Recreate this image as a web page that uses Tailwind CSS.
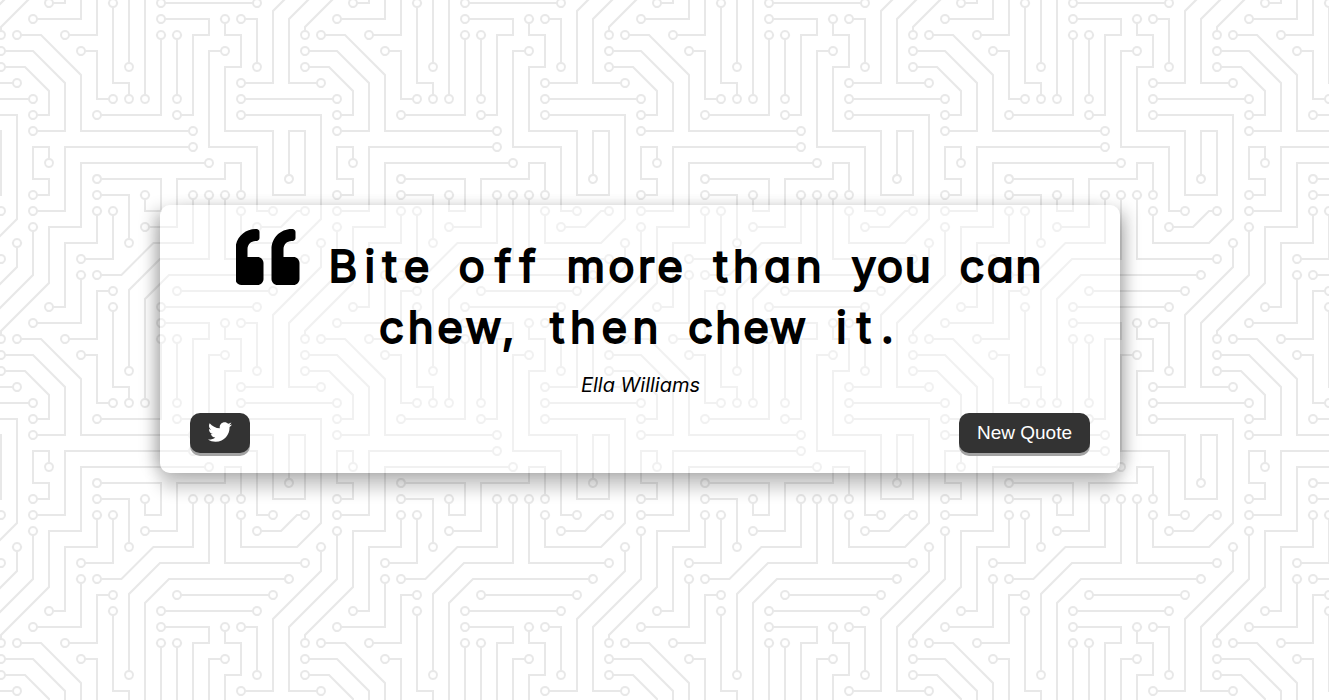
<!DOCTYPE html>
<html lang="en"><head><meta charset="utf-8"><title>Random Quote</title>
<script src="https://cdn.jsdelivr.net/npm/@tailwindcss/browser@4"></script></head>
<body class="relative min-h-screen overflow-hidden bg-white">
<svg class="absolute inset-0 h-[700px] w-full" aria-hidden="true"><defs><pattern id="circuit" width="304" height="304" patternUnits="userSpaceOnUse" patternTransform="translate(-16 -126)">
<path id="traces" fill="#000" fill-opacity="0.09" fill-rule="evenodd" d="M44.1 224a5 5 0 1 1 0 2H0v-2h44.1zm160 48a5 5 0 1 1 0 2H82v-2h122.1zm57.8-46a5 5 0 1 1 0-2H304v2h-42.1zm0 16a5 5 0 1 1 0-2H304v2h-42.1zm6.2-114a5 5 0 1 1 0 2h-86.2a5 5 0 1 1 0-2h86.2zm-256-48a5 5 0 1 1 0 2H0v-2h12.1zm185.8 34a5 5 0 1 1 0-2h86.2a5 5 0 1 1 0 2h-86.2zM258 12.1a5 5 0 1 1-2 0V0h2v12.1zm-64 208a5 5 0 1 1-2 0v-54.2a5 5 0 1 1 2 0v54.2zm48-198.2V80h62v2h-64V21.9a5 5 0 1 1 2 0zm16 16V64h46v2h-48V37.9a5 5 0 1 1 2 0zm-128 96V208h16v12.1a5 5 0 1 1-2 0V210h-16v-76.1a5 5 0 1 1 2 0zm-5.9-21.9a5 5 0 1 1 0 2H114v48H85.9a5 5 0 1 1 0-2H112v-48h12.1zm-6.2 130a5 5 0 1 1 0-2H176v-74.1a5 5 0 1 1 2 0V242h-60.1zm-16-64a5 5 0 1 1 0-2H114v48h10.1a5 5 0 1 1 0 2H112v-48h-10.1zM66 284.1a5 5 0 1 1-2 0V274H50v30h-2v-32h18v12.1zM236.1 176a5 5 0 1 1 0 2H226v94h48v32h-2v-30h-48v-98h12.1zm25.8-30a5 5 0 1 1 0-2H274v44.1a5 5 0 1 1-2 0V146h-10.1zm-64 96a5 5 0 1 1 0-2H208v-80h16v-14h-42.1a5 5 0 1 1 0-2H226v18h-16v80h-12.1zm86.2-210a5 5 0 1 1 0 2H272V0h2v32h10.1zM98 101.9V146H53.9a5 5 0 1 1 0-2H96v-42.1a5 5 0 1 1 2 0zM53.9 34a5 5 0 1 1 0-2H80V0h2v34H53.9zm60.1 3.9V66H82v64H69.9a5 5 0 1 1 0-2H80V64h32V37.9a5 5 0 1 1 2 0zM101.9 82a5 5 0 1 1 0-2H128V37.9a5 5 0 1 1 2 0V82h-28.1zm16-64a5 5 0 1 1 0-2H146v44.1a5 5 0 1 1-2 0V18h-26.1zm102.2 270a5 5 0 1 1 0 2H98v14h-2v-16h124.1zM242 149.9V160h16v34h-16v62h48v48h-2v-46h-48v-66h16v-30h-16v-12.1a5 5 0 1 1 2 0zM53.9 18a5 5 0 1 1 0-2H64V2H48V0h18v18H53.9zm112 32a5 5 0 1 1 0-2H192V0h50v2h-48v48h-28.1zm-48-48a5 5 0 0 1-9.8-2h2.07a3 3 0 1 0 5.66 0H178v34h-18V21.9a5 5 0 1 1 2 0V32h14V2h-58.1zm0 96a5 5 0 1 1 0-2H137l32-32h39V21.9a5 5 0 1 1 2 0V66h-40.17l-32 32H117.9zm28.1 90.1a5 5 0 1 1-2 0v-76.51L175.59 80H224V21.9a5 5 0 1 1 2 0V82h-49.59L146 112.41v75.69zm16 32a5 5 0 1 1-2 0v-99.51L184.59 96H300.1a5 5 0 0 1 3.9-3.9v2.07a3 3 0 0 0 0 5.66v2.07a5 5 0 0 1-3.9-3.9H185.41L162 121.41v98.69zm-144-64a5 5 0 1 1-2 0v-3.51l48-48V48h32V0h2v50H66v55.41l-48 48v2.69zM50 53.9v43.51l-48 48V208h26.1a5 5 0 1 1 0 2H0v-65.41l48-48V53.9a5 5 0 1 1 2 0zm-16 16V89.41l-34 34v-2.82l32-32V69.9a5 5 0 1 1 2 0zM12.1 32a5 5 0 1 1 0 2H9.41L0 43.41V40.6L8.59 32h3.51zm265.8 18a5 5 0 1 1 0-2h18.69l7.41-7.41v2.82L297.41 50H277.9zm-16 160a5 5 0 1 1 0-2H288v-71.41l16-16v2.82l-14 14V210h-28.1zm-208 32a5 5 0 1 1 0-2H64v-22.59L40.59 194H21.9a5 5 0 1 1 0-2H41.41L66 216.59V242H53.9zm150.2 14a5 5 0 1 1 0 2H96v-56.6L56.6 162H37.9a5 5 0 1 1 0-2h19.5L98 200.6V256h106.1zm-150.2 2a5 5 0 1 1 0-2H80v-46.59L48.59 178H21.9a5 5 0 1 1 0-2H49.41L82 208.59V258H53.9zM34 39.8v1.61L9.41 66H0v-2h8.59L32 40.59V0h2v39.8zM2 300.1a5 5 0 0 1 3.9 3.9H3.83A3 3 0 0 0 0 302.17V256h18v48h-2v-46H2v42.1zM34 241v63h-2v-62H0v-2h34v1zM17 18H0v-2h16V0h2v18h-1zm273-2h14v2h-16V0h2v16zm-32 273v15h-2v-14h-14v14h-2v-16h18v1zM0 92.1A5.02 5.02 0 0 1 6 97a5 5 0 0 1-6 4.9v-2.07a3 3 0 1 0 0-5.66V92.1zM80 272h2v32h-2v-32zm37.9 32h-2.07a3 3 0 0 0-5.66 0h-2.07a5 5 0 0 1 9.8 0zM5.9 0A5.02 5.02 0 0 1 0 5.9V3.83A3 3 0 0 0 3.83 0H5.9zm294.2 0h2.07A3 3 0 0 0 304 3.83V5.9a5 5 0 0 1-3.9-5.9zm3.9 300.1v2.07a3 3 0 0 0-1.83 1.83h-2.07a5 5 0 0 1 3.9-3.9z"/>
</pattern></defs><rect width="100%" height="100%" fill="url(#circuit)"/></svg>
<script>
// Punch the solder-pad holes out of the traces: [x, y] centre of each pad.
const pads = [[49,225],[209,273],[257,225],[257,241],[273,129],[177,129],[17,81],[193,113],[289,113],[257,17],[193,225],[193,161],[241,17],[257,33],[129,129],[145,225],[129,113],[81,161],[113,241],[177,161],[97,177],[129,225],[65,289],[241,177],[257,145],[273,193],[193,241],[177,145],[289,33],[97,97],[49,145],[49,33],[113,33],[65,129],[97,81],[129,33],[113,17],[145,65],[225,289],[241,145],[49,17],[161,49],[161,17],[113,97],[209,17],[145,193],[225,17],[161,225],[17,161],[49,49],[33,209],[33,65],[17,33],[273,49],[257,209],[49,241],[17,193],[209,257],[33,161],[49,257],[17,177]];
const traces = document.getElementById('traces');
traces.setAttribute('d', traces.getAttribute('d') + pads.map(([x, y]) => `M${x - 3} ${y}a3 3 0 1 0 6 0a3 3 0 1 0-6 0z`).join(''));
</script>
<main class="relative w-[1280px] pt-[205px]">
<section class="mx-auto flex h-[268px] w-[960px] flex-col rounded-[10px] bg-white/40 px-[30px] pt-[20px] pb-[20px] text-black shadow-[0_16px_16px_rgba(0,0,0,0.2),11px_0_16px_-5px_rgba(0,0,0,0.22),-11px_0_16px_-5px_rgba(0,0,0,0.22)]">
<blockquote class="flex flex-col font-['Inter',sans-serif] text-[44px] leading-[61px] font-normal tracking-[5px] whitespace-nowrap [-webkit-text-stroke:1.8px_#000] [stroke-linejoin:round] [font-feature-settings:'cv11']">
<div class="flex h-[61px] pl-[45.5px]">
<svg class="mt-[4px] h-[56px] w-[64px] shrink-0" viewBox="4 32 512 448"><path d="M464 256h-80v-64c0-35.3 28.7-64 64-64h8c13.3 0 24-10.7 24-24V56c0-13.3-10.7-24-24-24h-8c-88.4 0-160 71.6-160 160v240c0 26.500 21.500 48 48 48h128c26.500 0 48-21.500 48-48V304c0-26.500-21.500-48-48-48zm-288 0H96v-64c0-35.300 28.700-64 64-64h8c13.300 0 24-10.700 24-24V56c0-13.300-10.700-24-24-24h-8C71.600 32 0 103.600 0 192v240c0 26.500 21.500 48 48 48h128c26.500 0 48-21.500 48-48V304c0-26.500-21.500-48-48-48z"/></svg>
<span class="ml-[29px] w-[130px] pt-[11px] tracking-[7.3px]">Bite</span><span class="w-[108px] pt-[11px] tracking-[10px]">off</span><span class="w-[147px] pt-[11px] tracking-[3.3px]">more</span><span class="w-[138px] pt-[11px]">than</span><span class="w-[108px] pt-[11px] tracking-[1.5px]">you</span><span class="pt-[11px] tracking-[2px]">can</span>
</div>
<div class="flex h-[61px] pl-[189px]"><span class="w-[171px] pt-[11px] tracking-[3.5px]">chew,</span><span class="w-[138px] pt-[11px] tracking-[5.5px]">then</span><span class="w-[148px] pt-[11px] tracking-[2px]">chew</span><span class="pt-[11px] tracking-[10px]">it.</span></div>
</blockquote>
<p class="mt-[23px] h-[30px] pl-px text-center font-['Inter',sans-serif] text-[20px] leading-[30px] italic [font-feature-settings:'cv11']">Ella Williams</p>
<div class="mt-auto flex justify-between">
<button class="flex h-10 w-[60px] items-center justify-center rounded-[10px] bg-[#333] pb-[2px] shadow-[0_3px_#a3a3a3]" aria-label="Tweet"><svg class="h-6 w-6" viewBox="0 0 512 512" fill="#fff"><path d="M459.370 151.716c.325 4.548.325 9.097.325 13.645 0 138.720-105.583 298.558-298.558 298.558-59.452 0-114.680-17.219-161.137-47.106 8.447.974 16.568 1.299 25.340 1.299 49.055 0 94.213-16.568 130.274-44.832-46.132-.975-84.792-31.188-98.112-72.772 6.498.974 12.995 1.624 19.818 1.624 9.421 0 18.843-1.300 27.614-3.573-48.081-9.747-84.143-51.980-84.143-102.985v-1.299c13.969 7.797 30.214 12.670 47.431 13.319-28.264-18.843-46.781-51.005-46.781-87.391 0-19.492 5.197-37.360 14.294-52.954 51.655 63.675 129.300 105.258 216.365 109.807-1.624-7.797-2.599-15.918-2.599-24.040 0-57.828 46.782-104.934 104.934-104.934 30.213 0 57.502 12.670 76.670 33.137 23.715-4.548 46.456-13.320 66.599-25.340-7.798 24.366-24.366 44.833-46.132 57.827 21.117-2.273 41.584-8.122 60.426-16.243-14.292 20.791-32.161 39.308-52.628 54.253z"/></svg></button>
<button class="h-10 w-[131px] rounded-[10px] bg-[#333] pt-px font-['Liberation_Sans',Arial,sans-serif] text-[19px] whitespace-nowrap text-white shadow-[0_3px_#a3a3a3]">New Quote</button>
</div>
</section>
</main>
</body></html>
